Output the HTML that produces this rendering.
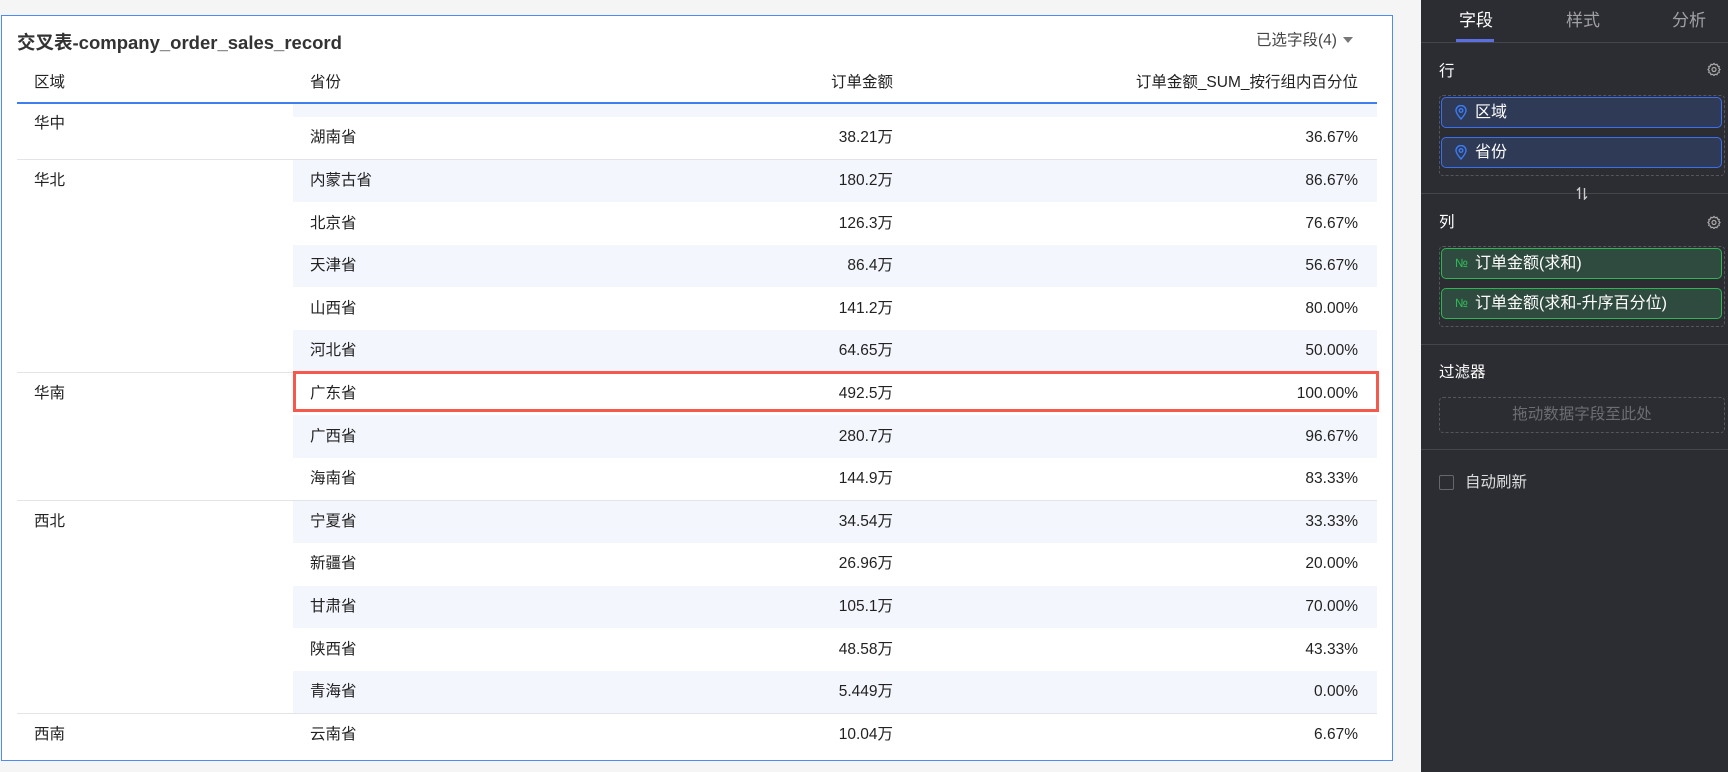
<!DOCTYPE html>
<html><head><meta charset="utf-8"><style>
*{margin:0;padding:0;box-sizing:border-box}
body{width:1728px;height:772px;background:#f5f5f6;position:relative;overflow:hidden;font-family:"Liberation Sans","Noto Sans CJK SC",sans-serif;color:#222}
.a{position:absolute;white-space:nowrap}
#card{position:absolute;left:1px;top:15px;width:1392px;height:746px;background:#fff;border:1px solid #4d8cf5}
.t{font-size:15.5px;line-height:20px}
.r{text-align:right}
.shade{position:absolute;left:293px;width:1084px;background:#f3f6fd}
.gl{position:absolute;left:17px;width:1360px;height:1px;background:#e3e4e8}
#panel{position:absolute;left:1421px;top:0;width:307px;height:772px;background:#2c2d32}
.w{color:#fff}
.sep{position:absolute;left:0;width:307px;height:1px;background:#45464b}
.dash{position:absolute;left:18px;width:286px;border:1px dashed #55565b;border-radius:4px}
.pill{position:absolute;left:20px;width:281px;height:31px;border-radius:5px;color:#fff;font-size:16px;line-height:29px;padding-left:33px}
.pb{background:#2f3a57;border:1.5px solid #3a6ff0}
.pg{background:#2f4a3e;border:1.5px solid #2fb552}
</style></head><body>
<div id="card"></div>
<div class="a" style="left:17px;top:29px;font-size:18.5px;font-weight:bold;color:#333">交叉表-company_order_sales_record</div>
<div class="a t" style="left:1256px;top:31px;color:#444">已选字段(4)</div>
<div class="a" style="left:1343px;top:37px;width:0;height:0;border-left:5px solid transparent;border-right:5px solid transparent;border-top:6px solid #777"></div>
<div class="a t" style="left:34px;top:73px">区域</div>
<div class="a t" style="left:310px;top:73px">省份</div>
<div class="a t r" style="right:835px;top:73px">订单金额</div>
<div class="a t r" style="right:370px;top:73px">订单金额_SUM_按行组内百分位</div>
<div id="rows"></div>
<div class="a" style="left:17px;top:102px;width:1360px;height:2px;background:#3f7ef0"></div>
<div class="a" style="left:17px;top:744px;width:1360px;height:15px;background:#fff"></div>
<div class="a" style="left:293px;top:371px;width:1086px;height:41px;border:3px solid #f4594b"></div>
<script>
const rows=[["湖南省","38.21万","36.67%"],["内蒙古省","180.2万","86.67%"],["北京省","126.3万","76.67%"],["天津省","86.4万","56.67%"],["山西省","141.2万","80.00%"],["河北省","64.65万","50.00%"],["广东省","492.5万","100.00%"],["广西省","280.7万","96.67%"],["海南省","144.9万","83.33%"],["宁夏省","34.54万","33.33%"],["新疆省","26.96万","20.00%"],["甘肃省","105.1万","70.00%"],["陕西省","48.58万","43.33%"],["青海省","5.449万","0.00%"],["云南省","10.04万","6.67%"]];
let h='<div class="shade" style="top:103px;height:14px"></div>';
const H=42.6,T=117;
rows.forEach((r,i)=>{const top=T+i*H;
if(i%2==1)h+=`<div class="shade" style="top:${top}px;height:${H}px"></div>`;
const y=top+H/2-10;
h+=`<div class="a t" style="left:310px;top:${y}px">${r[0]}</div><div class="a t r" style="right:835px;top:${y}px">${r[1]}</div><div class="a t r" style="right:370px;top:${y}px">${r[2]}</div>`;});
[1,6,9,14].forEach(i=>{h+=`<div class="gl" style="top:${T+i*H-0.5}px"></div>`});
const reg=[["华中",114],["华北",T+1*H+H/2-10],["华南",T+6*H+H/2-10],["西北",T+9*H+H/2-10],["西南",T+14*H+H/2-10]];
reg.forEach(r=>h+=`<div class="a t" style="left:34px;top:${r[1]}px">${r[0]}</div>`);
document.getElementById('rows').innerHTML=h;
</script>
<div id="panel">
<div class="a" style="left:38px;top:6px;font-size:17px;color:#fff">字段</div>
<div class="a" style="left:35px;top:39px;width:38px;height:3px;background:#5b6fe0"></div>
<div class="a" style="left:145px;top:6px;font-size:17px;color:#a0a0a5">样式</div>
<div class="a" style="left:251px;top:6px;font-size:17px;color:#a0a0a5">分析</div>
<div class="sep" style="top:42px"></div>
<div class="a w t" style="left:18px;top:62px">行</div>
<svg class="a" style="left:286px;top:62px" width="14" height="14" viewBox="0 0 14 14" fill="none" stroke="#aaa" stroke-width="1.2"><path d="M7 1.5l1.3 1.2 1.7-.4.5 1.7 1.7.5-.4 1.7L13 7.5l-1.2 1.3.4 1.7-1.7.5-.5 1.7-1.7-.4L7 13.5l-1.3-1.2-1.7.4-.5-1.7-1.7-.5.4-1.7L1 7.5l1.2-1.3-.4-1.7 1.7-.5.5-1.7 1.7.4z"/><circle cx="7" cy="7.5" r="2"/></svg>
<div class="dash" style="top:95px;height:81px"></div>
<div class="pill pb" style="top:97px">区域</div>
<div class="pill pb" style="top:137px">省份</div>
<svg class="a" style="left:34px;top:105px" width="12" height="15" viewBox="0 0 12 15" fill="none" stroke="#3a7cf5" stroke-width="1.4"><path d="M6 14C2.5 10 1 7.8 1 5.5a5 5 0 0110 0C11 7.8 9.5 10 6 14z"/><circle cx="6" cy="5.5" r="1.8"/></svg>
<svg class="a" style="left:34px;top:145px" width="12" height="15" viewBox="0 0 12 15" fill="none" stroke="#3a7cf5" stroke-width="1.4"><path d="M6 14C2.5 10 1 7.8 1 5.5a5 5 0 0110 0C11 7.8 9.5 10 6 14z"/><circle cx="6" cy="5.5" r="1.8"/></svg>
<div class="sep" style="top:193px"></div>
<svg class="a" style="left:155px;top:187px" width="12" height="13" viewBox="0 0 12 13" stroke="#ccc" stroke-width="1.4" fill="none"><path d="M3.5 12V1L1 3.5M8.5 1v11L11 9.5"/></svg>
<div class="a w t" style="left:18px;top:213px">列</div>
<svg class="a" style="left:286px;top:215px" width="14" height="14" viewBox="0 0 14 14" fill="none" stroke="#aaa" stroke-width="1.2"><path d="M7 1.5l1.3 1.2 1.7-.4.5 1.7 1.7.5-.4 1.7L13 7.5l-1.2 1.3.4 1.7-1.7.5-.5 1.7-1.7-.4L7 13.5l-1.3-1.2-1.7.4-.5-1.7-1.7-.5.4-1.7L1 7.5l1.2-1.3-.4-1.7 1.7-.5.5-1.7 1.7.4z"/><circle cx="7" cy="7.5" r="2"/></svg>
<div class="dash" style="top:246px;height:81px"></div>
<div class="pill pg" style="top:248px">订单金额(求和)</div>
<div class="pill pg" style="top:288px">订单金额(求和-升序百分位)</div>
<div class="a" style="left:34px;top:256px;font-size:12px;color:#2fc05a">№</div>
<div class="a" style="left:34px;top:296px;font-size:12px;color:#2fc05a">№</div>
<div class="sep" style="top:344px"></div>
<div class="a w t" style="left:18px;top:363px">过滤器</div>
<div class="dash" style="top:397px;height:36px;text-align:center;color:#6c6d72;font-size:15.5px;line-height:34px">拖动数据字段至此处</div>
<div class="sep" style="top:449px"></div>
<div class="a" style="left:18px;top:475px;width:15px;height:15px;border:1px solid #66676c;border-radius:2px"></div>
<div class="a t" style="left:44px;top:473px;color:#ddd">自动刷新</div>
</div>
</body></html>
